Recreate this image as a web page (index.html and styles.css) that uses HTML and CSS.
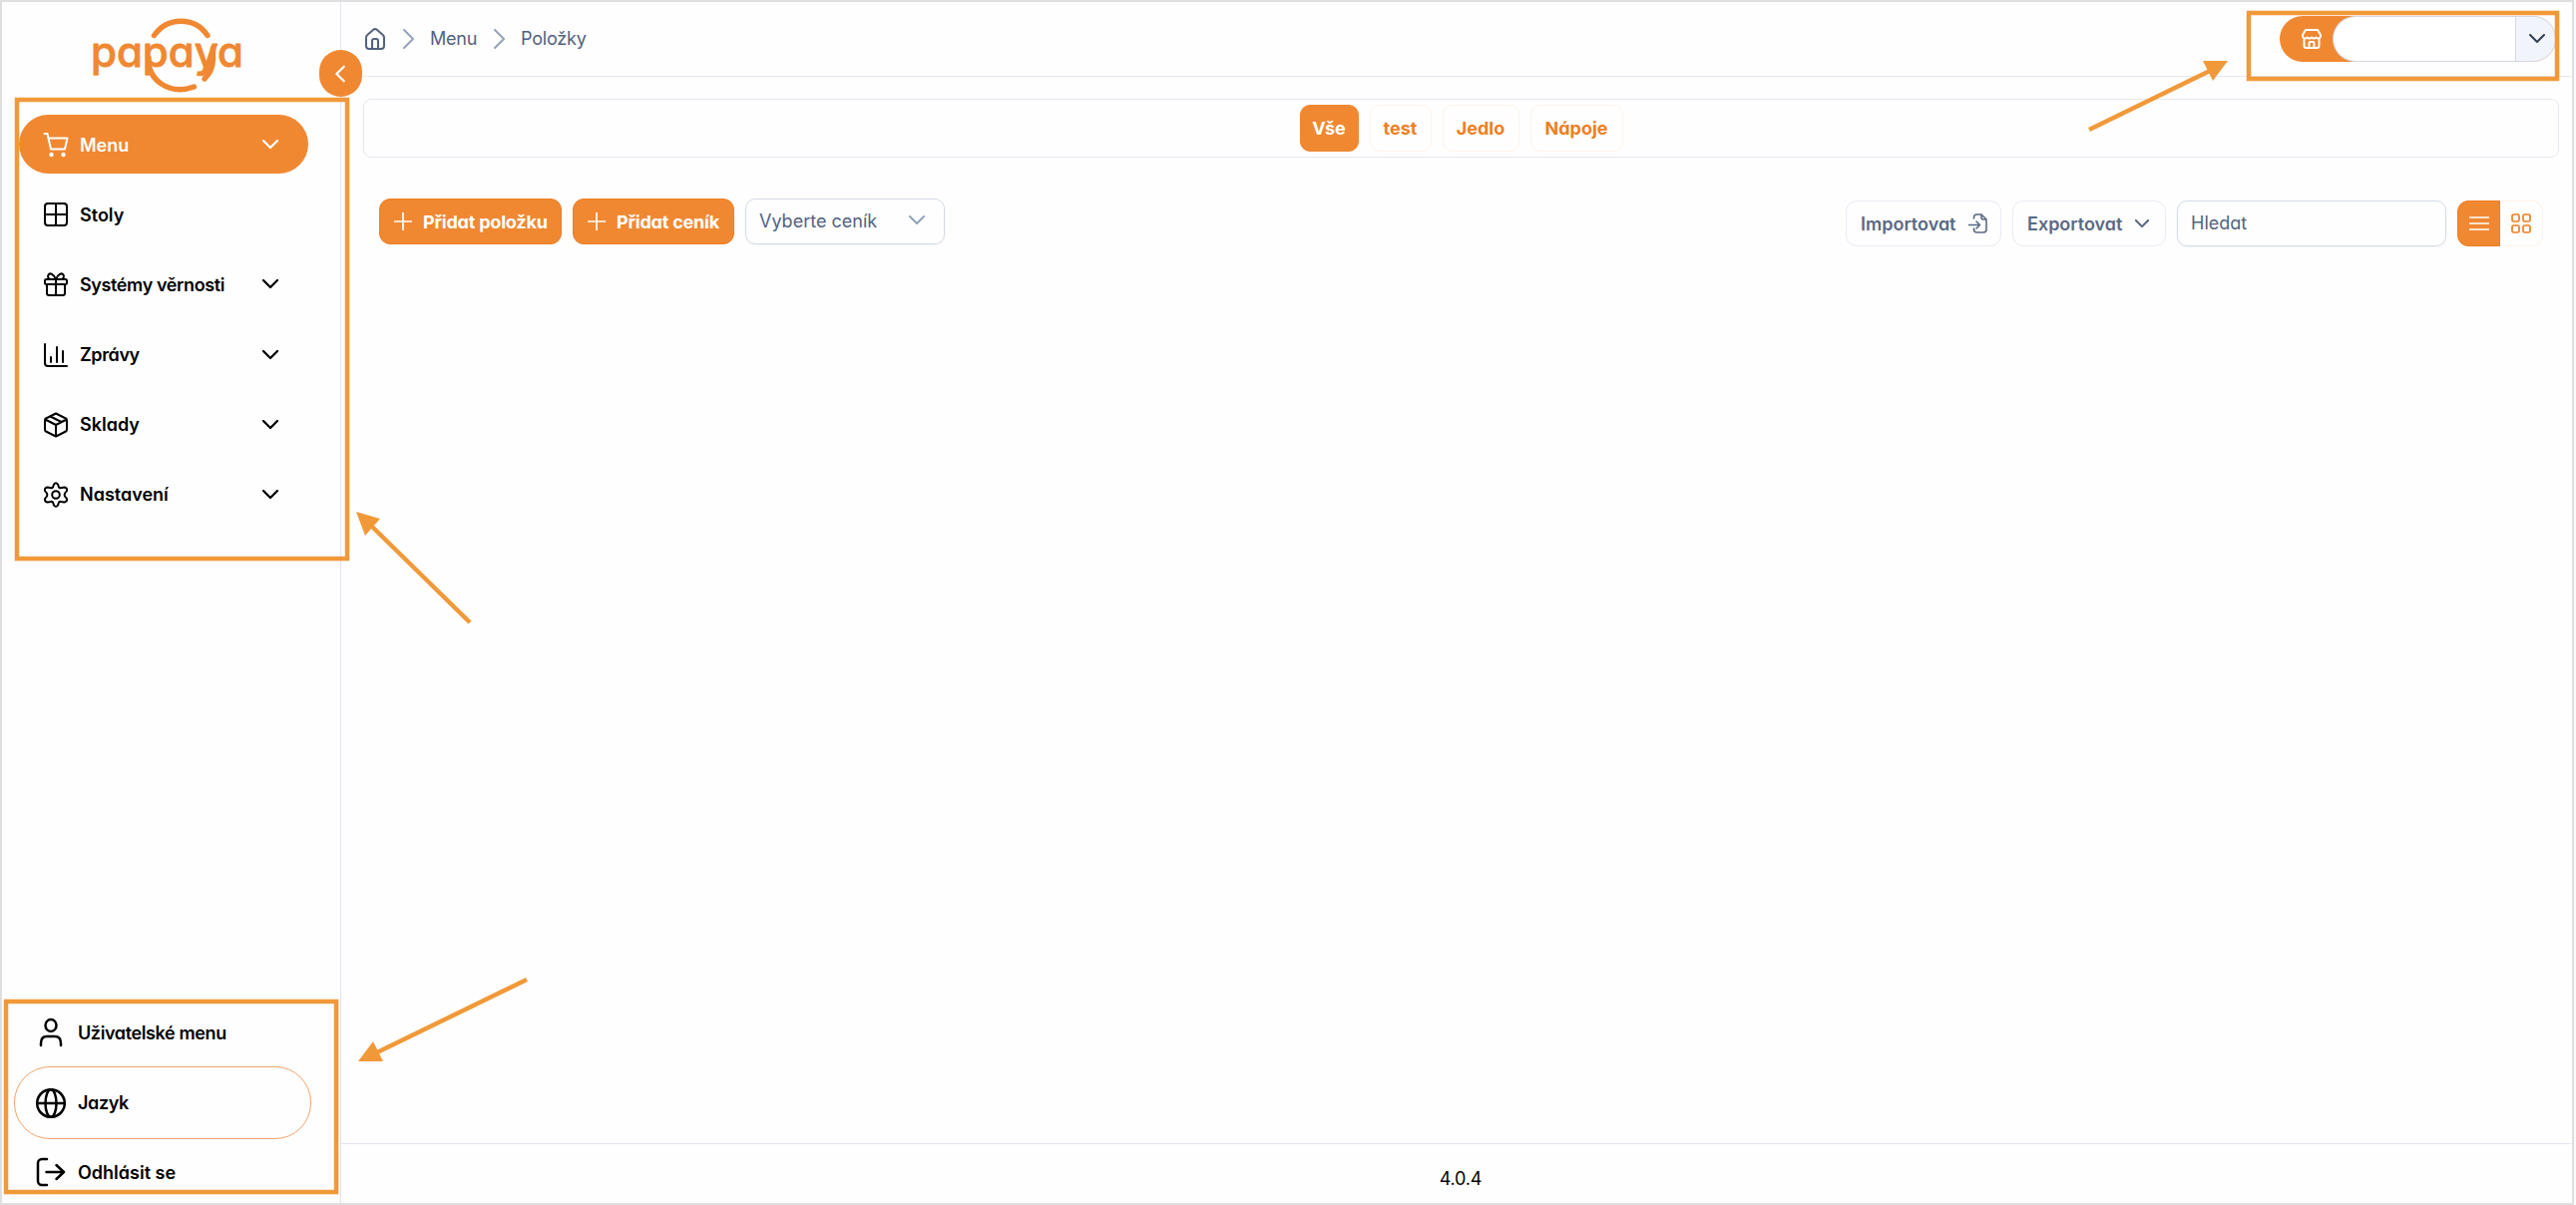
FILE: index.html
```html
<!DOCTYPE html>
<html lang="cs">
<head>
<meta charset="utf-8">
<meta name="viewport" content="width=device-width, initial-scale=1.0">
<link rel="stylesheet" href="styles.css">
<title>Papaya - Položky</title>
</head>
<body>
  <div class="app">
    <aside class="sidebar">
      <svg class="logo" viewBox="0 0 180 90">
        <text class="logo-text" x="11" y="56.5" textLength="153">papaya</text>
        <path d="M74.5 25.5C88 6.500 115 6.500 128 25.5"/>
        <path d="M69 48C68 70 89 86 114.500 77"/>
        <path d="M133.500 38V50C133 59 129 65 125 69"/>
      </svg>
      <button class="toggle"><svg viewBox="0 0 24 24"><path d="M15 4l-8 8 8 8"/></svg></button>

      <nav class="main-nav">
        <a class="nav-item active">
          <svg class="icon" viewBox="0 0 24 24"><path d="M.5 1H3.500L7 16.500H21L23.500 5.500H4.500"/><circle class="dot" cx="7.500" cy="22" r="2.200"/><circle class="dot" cx="19.500" cy="22" r="2.200"/></svg>
          <span>Menu</span>
          <svg class="chevron" viewBox="0 0 16 10"><path d="M1 1l7 7 7-7"/></svg>
        </a>
        <a class="nav-item">
          <svg class="icon" viewBox="0 0 24 24"><rect x="1" y="1" width="22" height="22" rx="3"/><path d="M12 1v22M1 12h22"/></svg>
          <span>Stoly</span>
        </a>
        <a class="nav-item">
          <svg class="icon" viewBox="0 0 24 24"><rect x="1" y="7" width="22" height="5" rx="1.500"/><path d="M3 12v9a2 2 0 0 0 2 2h14a2 2 0 0 0 2-2v-9M12 7v16M12 7C10 2 6 0 4.500 2.500C3 5 5 7 7 7M12 7C14 2 18 0 19.500 2.500C21 5 19 7 17 7"/></svg>
          <span class="tight">Systémy věrnosti</span>
          <svg class="chevron" viewBox="0 0 16 10"><path d="M1 1l7 7 7-7"/></svg>
        </a>
        <a class="nav-item">
          <svg class="icon" viewBox="0 0 24 24"><path d="M1 1v19a3 3 0 0 0 3 3h19M7 14v5M13 4v15M19 8v11"/></svg>
          <span class="tight">Zprávy</span>
          <svg class="chevron" viewBox="0 0 16 10"><path d="M1 1l7 7 7-7"/></svg>
        </a>
        <a class="nav-item">
          <svg class="icon" viewBox="0 0 24 24"><path d="M12 .5L22 5.500Q23 6 23 7.500V16.500Q23 18 22 18.500L12 23.500L2 18.500Q1 18 1 16.500V7.500Q1 6 2 5.500ZM1.500 6.500L12 12L22.500 6.500M12 12v11.500M6.500 3.500L17.500 9"/></svg>
          <span>Sklady</span>
          <svg class="chevron" viewBox="0 0 16 10"><path d="M1 1l7 7 7-7"/></svg>
        </a>
        <a class="nav-item">
          <svg class="icon" viewBox="0 0 24 24"><path d="M10 1.500Q12-1 14 1.500L15 4.500Q16 5.500 17.500 5L20.500 4.500Q23.500 5 23 8L21 10.500Q20.300 12 21 13.500L23 16Q23.500 19 20.500 19.500L17.500 19Q16 18.500 15 19.500L14 22.500Q12 25 10 22.500L9 19.500Q8 18.500 6.500 19L3.500 19.500Q.5 19 1 16L3 13.500Q3.700 12 3 10.500L1 8Q.5 5 3.500 4.500L6.500 5Q8 5.500 9 4.500Z"/><circle cx="12" cy="12" r="3.800"/></svg>
          <span>Nastavení</span>
          <svg class="chevron" viewBox="0 0 16 10"><path d="M1 1l7 7 7-7"/></svg>
        </a>
      </nav>

      <nav class="user-nav">
        <a class="user-item">
          <svg class="icon" viewBox="0 0 30 30"><ellipse cx="15" cy="8" rx="5.500" ry="6"/><path d="M5 28v-2c0-5 2-7 6-7h8c4 0 6 2 6 7v2"/></svg>
          <span class="tight">Uživatelské menu</span>
        </a>
        <a class="user-item outlined">
          <svg class="icon" viewBox="0 0 30 30"><circle cx="15" cy="15" r="13.800"/><ellipse cx="15" cy="15" rx="5.500" ry="13.800"/><path d="M1 15h28"/></svg>
          <span class="tight">Jazyk</span>
        </a>
        <a class="user-item">
          <svg class="icon" viewBox="0 0 30 30"><path d="M11 2H6a4 4 0 0 0-4 4v18a4 4 0 0 0 4 4h5M10.500 15H28M20.500 8l7.500 7-7.500 7"/></svg>
          <span>Odhlásit se</span>
        </a>
      </nav>
    </aside>

    <main class="content">
      <header class="topbar">
        <div class="breadcrumb">
          <svg class="home" viewBox="0 0 20 22"><path d="M1 9.500Q1 8 2.500 6.800L8.500 1.600Q10 .5 11.500 1.600L17.500 6.800Q19 8 19 9.500V18Q19 21 16 21H4Q1 21 1 18ZM7 21v-8q0-2 2-2h2q2 0 2 2v8"/></svg>
          <svg class="sep" viewBox="0 0 12 20"><path d="M1 1l9 9-9 9"/></svg>
          <span class="crumb-menu">Menu</span>
          <svg class="sep" viewBox="0 0 12 20"><path d="M1 1l9 9-9 9"/></svg>
          <span class="crumb-items">Položky</span>
        </div>
        <div class="store">
          <svg class="store-icon" viewBox="0 0 20 20"><path d="M4 1h12l3 5v1.500a2.500 2.500 0 0 1-4.500 1a3 3 0 0 1-4.500 0a3 3 0 0 1-4.500 0A2.500 2.500 0 0 1 1 7.500V6ZM2.500 9.500V17q0 2 2 2h11q2 0 2-2V9.500M7.500 19v-5q0-1 1-1h3q1 0 1 1v5"/></svg>
          <div class="store-name"></div>
          <div class="store-arrow"><svg class="chevron" viewBox="0 0 16 10"><path d="M1 1l7 7 7-7"/></svg></div>
        </div>
      </header>

      <div class="tabs">
        <a class="tab selected">Vše</a>
        <a class="tab tab-test">test</a>
        <a class="tab tab-food">Jedlo</a>
        <a class="tab tab-drinks">Nápoje</a>
      </div>

      <div class="toolbar">
        <button class="btn primary add-item"><svg viewBox="0 0 18 18"><path d="M9 0v18M0 9h18"/></svg><span>Přidat položku</span></button>
        <button class="btn primary add-list"><svg viewBox="0 0 18 18"><path d="M9 0v18M0 9h18"/></svg><span>Přidat ceník</span></button>
        <div class="select"><span>Vyberte ceník</span><svg class="chevron" viewBox="0 0 16 10"><path d="M1 1l7 7 7-7"/></svg></div>

        <div class="tools">
          <button class="btn plain import"><span>Importovat</span><svg class="import-icon" viewBox="0 0 19 20"><path d="M5.500 5V4q0-3 3-3H13l5 5v10q0 3-3 3H8.500q-3 0-3-3v-1M13 1v3q0 2 2 2h3M0 11.500h11.500M8 8l3.500 3.500L8 15"/></svg></button>
          <button class="btn plain export"><span>Exportovat</span><svg class="chevron" viewBox="0 0 16 10"><path d="M1 1l7 7 7-7"/></svg></button>
          <div class="search">Hledat</div>
          <div class="view-switch">
            <div class="view on"><svg viewBox="0 0 20 20"><path d="M0 4h20M0 10h20M0 16h20"/></svg></div>
            <div class="view"><svg viewBox="0 0 20 20"><rect x="1" y="1" width="7" height="7" rx="1.500"/><rect x="12" y="1" width="7" height="7" rx="1.500"/><rect x="1" y="12" width="7" height="7" rx="1.500"/><rect x="12" y="12" width="7" height="7" rx="1.500"/></svg></div>
          </div>
        </div>
      </div>

      <footer class="footer">4.0.4</footer>
    </main>
  </div>

  <!-- Highlight boxes and arrows over the screen -->
  <svg class="marks" viewBox="0 0 2582 1208">
    <rect x="17" y="100" width="331" height="460"/>
    <rect x="6" y="1004" width="331" height="191"/>
    <rect x="2254" y="13" width="309" height="66"/>
    <path d="M471 624L372 527M528 982L378 1055M2094 130L2215 71"/>
    <polygon points="357,513 381,520 366,537"/>
    <polygon points="359,1064 374,1044 384,1064"/>
    <polygon points="2233,61 2208,61 2218,81"/>
  </svg>
</body>
</html>
```
FILE: styles.css
```css
* { box-sizing: border-box; }
body {
  margin: 0;
  width: 2582px;
  height: 1208px;
  overflow: hidden;
  position: relative;
  background: #fafafa;
  font-family: Inter, "Noto Sans", sans-serif;
  font-feature-settings: "cv11";
  font-size: 18px;
  color: #000;
}
svg {
  fill: none;
  stroke: currentColor;
  stroke-width: 2;
  stroke-linecap: round;
  stroke-linejoin: round;
  flex: none;
}
button {
  font: inherit;
  font-feature-settings: inherit;
  border: 0;
  padding: 0;
}
span { white-space: nowrap; }
.app {
  width: 2580px;
  height: 1208px;
  border: 2px solid #dfdfdf;
  display: flex;
  background: #fefefe;
}

/* Sidebar */
.sidebar {
  width: 340px;
  position: relative;
  border-right: 1px solid #e2e5ee;
  display: flex;
  flex-direction: column;
}
.logo {
  width: 180px;
  height: 90px;
  margin: 8px 0 0 78px;
  color: #f08832;
  stroke-width: 5.4;
}
.logo-text {
  font-size: 42px;
  font-weight: 500;
  fill: #f08832;
  stroke: #f08832;
  stroke-width: .8;
}
.toggle {
  position: absolute;
  right: -22px;
  top: 48px;
  width: 43px;
  height: 47px;
  border-radius: 22px;
  background: #f08832;
  color: #fff;
  display: flex;
  align-items: center;
  justify-content: center;
}
.toggle svg {
  width: 22px;
  height: 22px;
  stroke-width: 2.400;
}
.main-nav {
  margin: 15px 0 0 17px;
  width: 290px;
  display: flex;
  flex-direction: column;
  gap: 11.2px;
}
.nav-item {
  height: 59px;
  padding: 1px 30px 0 25px;
  border-radius: 30px;
  display: flex;
  align-items: center;
  font-weight: 600;
}
.nav-item .icon {
  width: 24px;
  height: 24px;
  margin-right: 12px;
  overflow: visible;
}
.nav-item .chevron { margin-left: auto; stroke-width: 2.300; }
.nav-item.active {
  background: #f08832;
  color: #fff;
}
.tight { letter-spacing: -.38px; }
.dot { fill: currentColor; stroke: none; }
.chevron {
  width: 16px;
  height: 10px;
}
.user-nav {
  margin: auto 0 -4px 12px;
  width: 298px;
}
.user-item {
  height: 70px;
  padding-left: 22px;
  display: flex;
  align-items: center;
  gap: 12px;
  font-weight: 600;
}
.user-item .icon {
  width: 30px;
  height: 30px;
  stroke-width: 2.500;
}
.outlined {
  height: 73px;
  margin: -1px 0 -2px;
  padding-left: 21px;
  border: 1px solid #f2a36c;
  border-radius: 36px;
}

/* Content */
.content {
  flex: 1;
  display: flex;
  flex-direction: column;
}
.topbar {
  height: 75px;
  padding: 0 16px 0 24px;
  border-bottom: 1px solid #e5e9f2;
  display: flex;
  justify-content: space-between;
}
.breadcrumb {
  height: 73px;
  display: flex;
  align-items: center;
  color: #52627e;
  letter-spacing: -.2px;
}
.home { width: 20px; height: 22px; margin-right: 18px; }
.sep {
  width: 12px;
  height: 20px;
  color: #94a3b8;
  margin-right: 15px;
}
.crumb-menu { width: 64px; }
.store {
  width: 277px;
  height: 46px;
  margin-top: 14px;
  border-radius: 23px;
  background: #f08832;
  display: flex;
  align-items: center;
  overflow: hidden;
}
.store-icon { width: 20px; height: 20px; margin: 0 11px 0 22px; color: #fff; }
.store-name {
  flex: 1;
  height: 46px;
  background: #fff;
  border: 1px solid #d5d8e4;
  border-right: 0;
  border-radius: 23px 0 0 23px;
}
.store-arrow {
  width: 41px;
  height: 46px;
  border: 1px solid #d5d8e4;
  border-radius: 0 23px 23px 0;
  background: #f1f5fb;
  color: #334155;
  box-shadow: 20px 0 0 #fefefe;
  padding-left: 3px;
  display: flex;
  align-items: center;
  justify-content: center;
}
.tabs {
  height: 59px;
  margin: 22px 13px 0 22px;
  border: 1px solid #e6e9f0;
  border-radius: 8px;
  display: flex;
  align-items: center;
  justify-content: center;
  gap: 11px;
}
.tab {
  width: 59px;
  height: 47px;
  border: 1px solid #fff4ea;
  border-radius: 10px;
  color: #ee7f22;
  font-weight: 700;
  display: flex;
  align-items: center;
  justify-content: center;
}
.tab.selected { background: #f08832; color: #fff; border-color: #f08832; }
.tab-test { width: 62px; }
.tab-food { width: 77px; }
.tab-drinks { width: 93px; }

.toolbar {
  margin: 41px 29px 0 38px;
  display: flex;
  gap: 11px;
}
.btn {
  height: 46px;
  border-radius: 11px;
  display: flex;
  align-items: center;
}
.primary {
  background: #f08832;
  border: 1px solid #ed7d20;
  color: #fff;
  font-weight: 700;
  letter-spacing: -.2px;
  padding-left: 14px;
}
.primary svg { width: 18px; height: 18px; margin-right: 11px; stroke-width: 1.700; }
.add-item { width: 183px; }
.add-list { width: 162px; }
.select {
  width: 200px;
  height: 46px;
  padding: 0 19px 2px 13px;
  border: 1px solid #d4dbe6;
  border-radius: 10px;
  color: #52627e;
  display: flex;
  align-items: center;
  justify-content: space-between;
  box-shadow: 0 1px 2px rgba(20, 30, 60, .05);
}
.select .chevron { color: #94a3b8; }
.tools {
  margin: 2px 0 0 auto;
  display: flex;
  gap: 11px;
}
.plain {
  background: #fefefe;
  border: 1px solid #e8ecf4;
  color: #5a6984;
  font-weight: 600;
  justify-content: space-between;
  padding: 0 13px 0 14px;
}
.import { width: 156px; }
.import-icon { width: 19px; height: 20px; stroke-width: 1.600; }
.export { width: 154px; padding-right: 16px; }
.export .chevron { width: 14px; height: 9px; stroke-width: 2.400; }
.search {
  width: 270px;
  height: 46px;
  border: 1px solid #d4dbe6;
  border-radius: 10px;
  padding: 0 13px 2px;
  color: #52627e;
  display: flex;
  align-items: center;
  box-shadow: 0 1px 2px rgba(20, 30, 60, .05);
}
.view-switch {
  height: 46px;
  display: flex;
}
.view {
  width: 43px;
  border: 1px solid #fff1e4;
  border-left: 0;
  border-radius: 0 11px 11px 0;
  color: #ee7f22;
  display: flex;
  align-items: center;
  justify-content: center;
}
.view svg { width: 20px; height: 20px; stroke-width: 1.700; }
.view.on {
  background: #f08832;
  border: 1px solid #ed7d20;
  border-radius: 11px 0 0 11px;
  color: #fff;
}
.footer {
  margin-top: auto;
  height: 60px;
  border-top: 1px solid #e5e7f0;
  padding: 9px 0 0 8px;
  letter-spacing: -.2px;
  display: flex;
  align-items: center;
  justify-content: center;
}

/* Highlights */
.marks {
  position: absolute;
  left: 0;
  top: 0;
  width: 2582px;
  height: 1208px;
  color: #f19939;
  stroke-width: 4.500;
  stroke-linecap: butt;
  stroke-linejoin: miter;
  pointer-events: none;
}
.marks polygon { fill: currentColor; stroke: none; }
```
